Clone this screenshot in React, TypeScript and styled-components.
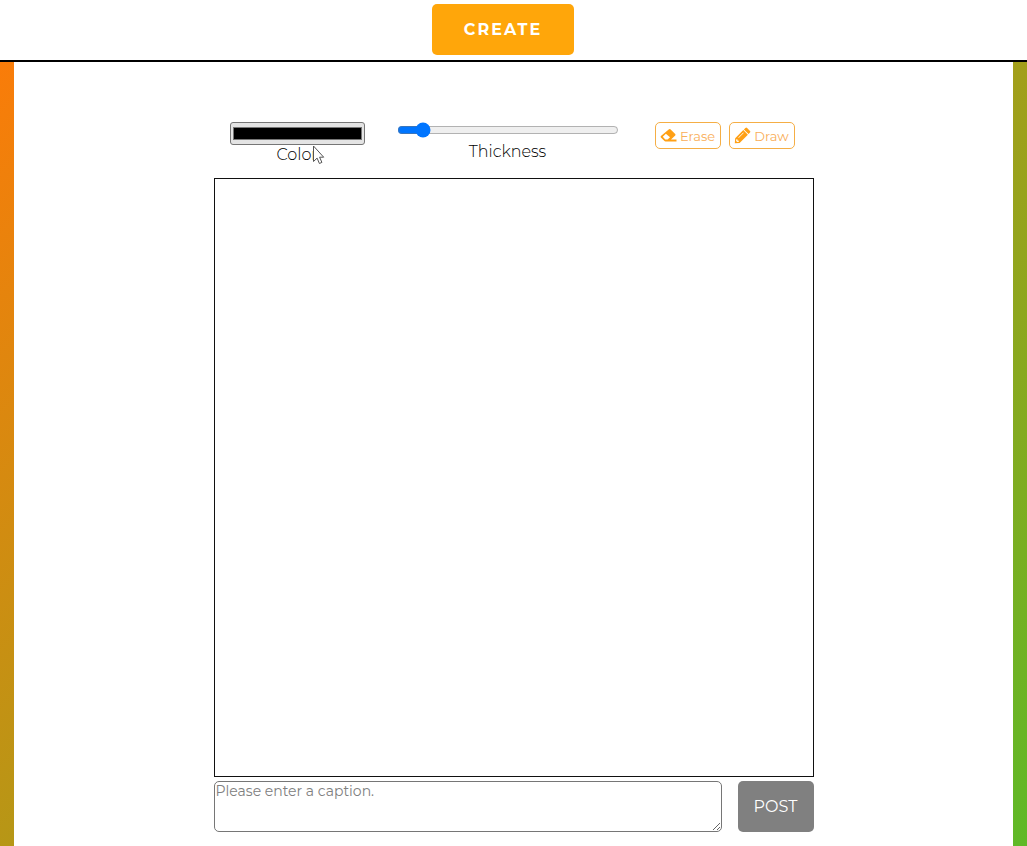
import React, { useState } from 'react';
import styled, { createGlobalStyle } from 'styled-components';

const GlobalStyle = createGlobalStyle`
  *, *::before, *::after { box-sizing: border-box; }
  body {
    margin: 0;
    font-family: Montserrat, Inter, "Liberation Sans", sans-serif;
    font-weight: 300;
    color: #000;
  }
  button, input, textarea { font-family: inherit; }
`;

const Page = styled.div`
  min-height: 100vh;
  display: flex;
  flex-direction: column;
  background: linear-gradient(135deg, #ff7a08, #5fb927);
`;

const Header = styled.header`
  display: flex;
  justify-content: center;
  padding: 4px 21px 5px 0;
  background: #fff;
  border-bottom: 2px solid #000;
`;

const CreateButton = styled.button`
  width: 142px;
  height: 51px;
  padding: 0;
  border: 0;
  border-radius: 5px;
  background: #ffa60a;
  color: #fff;
  font-size: 16px;
  font-weight: 700;
  letter-spacing: 2px;
`;

const Panel = styled.main`
  flex: 1;
  margin: 0 14px;
  padding: 60px 16px 14px;
  background: #fff;
`;

const Studio = styled.div`
  max-width: 600px;
  margin: 0 auto;
`;

const Toolbar = styled.div`
  display: flex;
  align-items: flex-start;
  height: 56px;
  padding: 0 19px 0 16px;
`;

const Field = styled.label<{ $width: number }>`
  position: relative;
  display: flex;
  flex-direction: column;
  align-items: center;
  width: ${({ $width }) => $width}px;
  margin-right: 32px;
  font-size: 16px;
  line-height: 20px;
`;

const ColorInput = styled.input`
  width: 100%;
  height: 23px;
  border: 1px solid #767676;
  border-radius: 3px;
  padding: 0;
  background: #e4e4e4;
`;

const RangeInput = styled.input`
  width: 100%;
  height: 16px;
  margin: 0 0 4px;
`;

const Tools = styled.div`
  display: flex;
  gap: 8px;
  margin-left: auto;
`;

const ToolButton = styled.button`
  display: flex;
  align-items: center;
  justify-content: center;
  gap: 3px;
  width: 66px;
  height: 27px;
  padding: 0;
  border: 1px solid #f5ae45;
  border-radius: 5px;
  background: #fff;
  color: #f9ae58;
  font-size: 13px;
  font-weight: 400;

  svg { flex: none; fill: #ffa015; }
`;

const Pointer = styled.svg`
  position: absolute;
  left: 83px;
  top: 23px;
`;

const Board = styled.canvas`
  display: block;
  width: 100%;
  aspect-ratio: 600 / 599;
  border: 1px solid #111;
  background: #fff;
`;

const CaptionForm = styled.form`
  display: flex;
  gap: 16px;
  margin-top: 4px;
`;

const Caption = styled.textarea`
  flex: 1;
  height: 51px;
  padding: 0 1px;
  border: 1px solid #767676;
  border-radius: 5px;
  font-size: 14px;
  font-weight: 400;
  line-height: 18px;

  &::placeholder { color: #808080; }
`;

const PostButton = styled.button`
  width: 76px;
  height: 51px;
  padding: 0;
  border: 0;
  border-radius: 5px;
  background: #808080;
  color: #fff;
  font-size: 16px;
  font-weight: 400;
`;

const EraserIcon = () => (
  <svg width="17" height="16" viewBox="0 0 17 16" aria-hidden="true">
    <path
      fillRule="evenodd"
      d="M9 1.300a1 1 0 0 1 1.400 0l4.800 4.700a1 1 0 0 1 0 1.400L11 11.400H16.500v2H5.600a2 2 0 0 1-1.400-.6L.9 9.500a1 1 0 0 1 0-1.400ZM5.900 5.700 2.800 8.800 5.300 11.400H7.600L10 9.300Z"
    />
  </svg>
);

const PencilIcon = () => (
  <svg width="17" height="17" viewBox="0 0 17 17" aria-hidden="true">
    <path
      fillRule="evenodd"
      d="M11.400 1a1.200 1.200 0 0 1 1.700 0l2.900 2.900a1.200 1.200 0 0 1 0 1.700L14.500 7.100 9.900 2.500ZM9.300 3.100 13.900 7.700 5.600 15.900.8 16.300 1.200 11.200ZM2.300 12.200 2.100 13.900 3.200 15 4.900 14.800 4.900 13.700 3.500 13.600 3.400 12.200ZM9.300 5.500 4.300 10.500 4.700 10.900 9.700 5.900Z"
    />
  </svg>
);

export default function App() {
  const [color, setColor] = useState('#000000');
  const [thickness, setThickness] = useState(10);
  const [caption, setCaption] = useState('');

  return (
    <>
      <GlobalStyle />
      <Page>
        <Header>
          <CreateButton type="button">CREATE</CreateButton>
        </Header>
        <Panel>
          <Studio>
            <Toolbar>
              <Field $width={135}>
                <ColorInput
                  type="color"
                  value={color}
                  onChange={(e) => setColor(e.target.value)}
                />
                Color
                <Pointer width="13" height="20" viewBox="0 0 13 20" aria-hidden="true">
                  <path
                    d="M.5 1v15.500l3.600-3.400 2.300 5.400 2.500-1.100-2.300-5.200h4.100Z"
                    fill="#fff"
                    stroke="#555"
                  />
                </Pointer>
              </Field>
              <Field $width={222}>
                <RangeInput
                  type="range"
                  min={1}
                  max={100}
                  value={thickness}
                  onChange={(e) => setThickness(Number(e.target.value))}
                />
                Thickness
              </Field>
              <Tools>
                <ToolButton type="button">
                  <EraserIcon />
                  Erase
                </ToolButton>
                <ToolButton type="button">
                  <PencilIcon />
                  Draw
                </ToolButton>
              </Tools>
            </Toolbar>
            <Board />
            <CaptionForm onSubmit={(e) => e.preventDefault()}>
              <Caption
                aria-label="Caption"
                placeholder="Please enter a caption."
                value={caption}
                onChange={(e) => setCaption(e.target.value)}
              />
              <PostButton type="submit">POST</PostButton>
            </CaptionForm>
          </Studio>
        </Panel>
      </Page>
    </>
  );
}
